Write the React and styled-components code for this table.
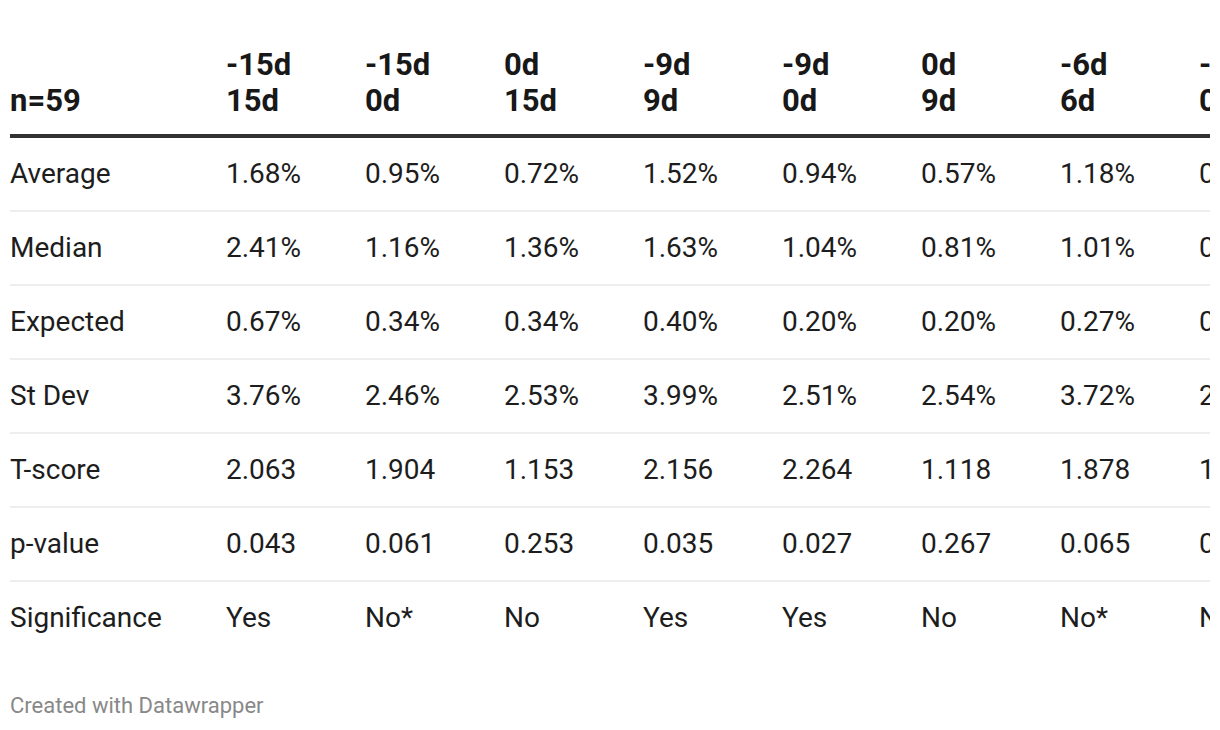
import React from "react";
import styled, { createGlobalStyle } from "styled-components";

const Global = createGlobalStyle`
  html, body { margin: 0; padding: 0; background: #ffffff; }
  body { font-family: Roboto, "Liberation Sans", Arial, sans-serif; color: #1d1d1d; }
`;

const Page = styled.div`
  padding: 0 0 0 10px;
  width: 1200px;
`;

const Clip = styled.div`
  width: 1200px;
  overflow: hidden;
`;

const Table = styled.table`
  border-collapse: collapse;
  table-layout: fixed;
  width: ${(p) => p.$width}px;
  font-size: 28px;
`;

const HeadCell = styled.th`
  text-align: left;
  vertical-align: bottom;
  font-weight: 700;
  font-size: 31px;
  color: #181818;
  line-height: 36px;
  padding: 47px 0 15px 0;
  border-bottom: 4px solid #333333;
  width: ${(p) => p.$w}px;
  white-space: nowrap;
`;

const Row = styled.tr`
  border-bottom: ${(p) => (p.$last ? "none" : "2px solid #eeeeee")};
`;

const Cell = styled.td`
  text-align: left;
  font-weight: 400;
  line-height: 36px;
  padding: 18px 0;
  color: #1d1d1d;
  white-space: nowrap;
`;

const Footer = styled.div`
  margin-top: 39px;
  font-size: 22px;
  line-height: 26px;
  color: #888888;
`;

const columns = [
  ["-15d", "15d"],
  ["-15d", "0d"],
  ["0d", "15d"],
  ["-9d", "9d"],
  ["-9d", "0d"],
  ["0d", "9d"],
  ["-6d", "6d"],
  ["-6d", "0d"],
];

const rows = [
  ["Average", "1.68%", "0.95%", "0.72%", "1.52%", "0.94%", "0.57%", "1.18%", "0.61%"],
  ["Median", "2.41%", "1.16%", "1.36%", "1.63%", "1.04%", "0.81%", "1.01%", "0.58%"],
  ["Expected", "0.67%", "0.34%", "0.34%", "0.40%", "0.20%", "0.20%", "0.27%", "0.13%"],
  ["St Dev", "3.76%", "2.46%", "2.53%", "3.99%", "2.51%", "2.54%", "3.72%", "2.71%"],
  ["T-score", "2.063", "1.904", "1.153", "2.156", "2.264", "1.118", "1.878", "1.384"],
  ["p-value", "0.043", "0.061", "0.253", "0.035", "0.027", "0.267", "0.065", "0.171"],
  ["Significance", "Yes", "No*", "No", "Yes", "Yes", "No", "No*", "No"],
];

const FIRST = 216;
const COL = 139;

export default function App() {
  const width = FIRST + COL * columns.length;
  return (
    <Page>
      <Global />
      <Clip>
        <Table $width={width}>
          <thead>
            <tr>
              <HeadCell $w={FIRST}>n=59</HeadCell>
              {columns.map(([a, b], i) => (
                <HeadCell key={i} $w={COL}>
                  {a}
                  <br />
                  {b}
                </HeadCell>
              ))}
            </tr>
          </thead>
          <tbody>
            {rows.map((r, i) => (
              <Row key={i} $last={i === rows.length - 1}>
                {r.map((v, j) => (
                  <Cell key={j}>{v}</Cell>
                ))}
              </Row>
            ))}
          </tbody>
        </Table>
      </Clip>
      <Footer>Created with Datawrapper</Footer>
    </Page>
  );
}
